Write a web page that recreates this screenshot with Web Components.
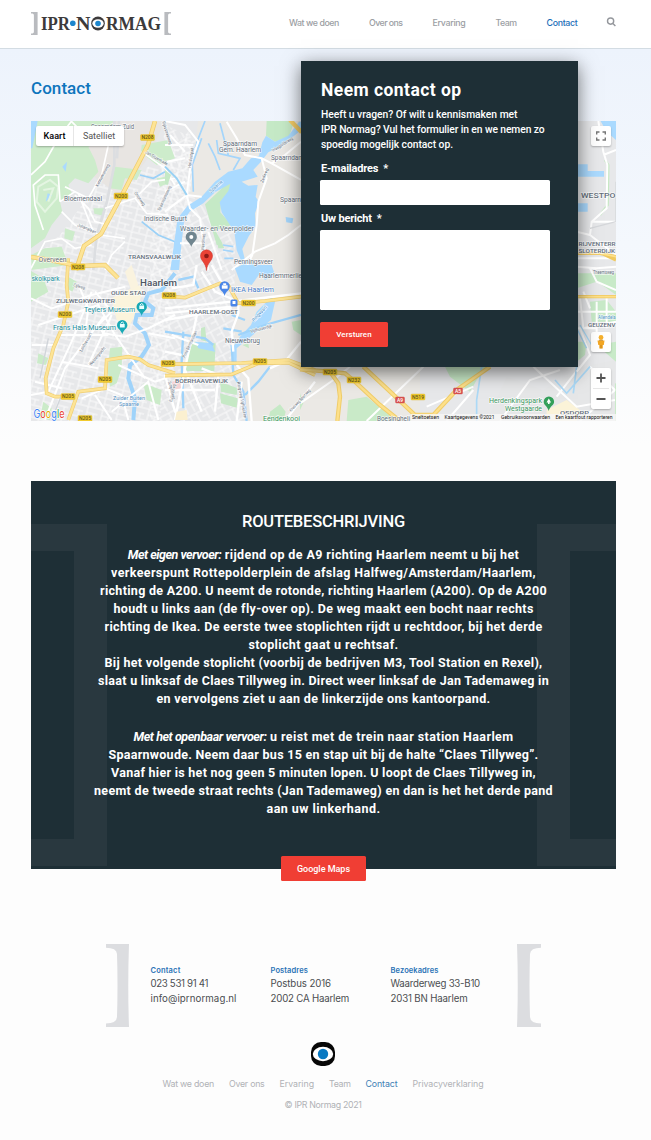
<!DOCTYPE html>
<html lang="nl">
<head>
<meta charset="utf-8">
<title>Contact - IPR Normag</title>
<style>
html,body{margin:0;padding:0}
body{width:651px;height:1140px;overflow:hidden;background:#fdfdfd;font-family:Roboto,"Liberation Sans",sans-serif}
</style>
</head>
<body>
<ipr-page></ipr-page>
<script>
function component(name, html, after) {
  customElements.define(name, class extends HTMLElement {
    constructor() {
      super();
      const t = document.createElement('template');
      t.innerHTML = html;
      this.attachShadow({mode: 'open'}).appendChild(t.content.cloneNode(true));
    }
    connectedCallback() { if (after) after(this); }
  });
}

component('ipr-logo', `
<style>:host{display:block;width:140px;height:24px}svg{display:block}</style>
<svg width="140" height="24" viewBox="31 11 140 24">
  <path d="M31 12h6.600v23H31v-1.600c2.400 0 2.900-.5 2.900-2V15.500c0-1.500-.5-2-2.900-2zM171 12h-6.600v23h6.600v-1.600c-2.400 0-2.900-.5-2.900-2V15.500c0-1.500.5-2 2.900-2z" fill="#b9bbbf"/>
  <g font-family="Liberation Serif,serif" font-weight="700" font-size="18.500" fill="#3c3a3b">
    <text x="41" y="29.800" textLength="29" lengthAdjust="spacingAndGlyphs">IPR</text>
    <text x="76" y="29.800" textLength="14.500" lengthAdjust="spacingAndGlyphs">N</text>
    <text x="106" y="29.800" textLength="55" lengthAdjust="spacingAndGlyphs">RMAG</text>
  </g>
  <circle cx="72.800" cy="23.300" r="2.800" fill="#1d86cd"/>
  <ellipse cx="98" cy="23.500" rx="6.800" ry="6.900" fill="#3c3a3b"/>
  <ellipse cx="98" cy="23.500" rx="5.700" ry="4.200" fill="#fff"/>
  <circle cx="98" cy="23.500" r="2.800" fill="#1d86cd"/>
</svg>`);

component('ipr-header', `
<style>
:host{display:flex;box-sizing:border-box;height:49px;padding:11px 35px 0 31px;background:#fff;border-bottom:1px solid #d3dce3;align-items:flex-start}
nav{display:flex;margin-left:118px;gap:30px;padding-top:5px;font-family:Inter,Roboto,sans-serif;font-size:8.800px;line-height:14px;font-weight:500;color:#9b9ea3}
.on{color:#1b6fb9}
svg{margin:6px 0 0 auto}
</style>
<ipr-logo></ipr-logo>
<nav><fit-text w="50">Wat we doen</fit-text><fit-text w="33.500">Over ons</fit-text><fit-text w="33">Ervaring</fit-text><fit-text w="21">Team</fit-text><fit-text w="31" class="on">Contact</fit-text></nav>
<svg width="10" height="10" viewBox="0 0 10 10" fill="none" stroke="#94979c" stroke-width="1.400"><circle cx="4.600" cy="4.100" r="3.100"/><path d="M6.900 6.400L9.400 8.900"/></svg>`);

component('city-map', `
<style>
:host{display:block;width:585px;height:300px;position:relative;overflow:hidden;background:#e9eaec}
svg{display:block}
.ctl{position:absolute;background:#fff;border-radius:2px;box-shadow:0 1px 2px #0004}
.type{left:5px;top:5px;width:88px;height:20px;display:flex;font-size:9px;line-height:20px;color:#555}
.type span{width:37px;text-align:center;border-right:1px solid #e6e6e6;color:#000;font-weight:500}
.type b{flex:1;text-align:center;font-weight:400}
.full{left:560px;top:5px;width:20px;height:20px}
.man{left:560px;top:211px;width:20px;height:20px}
.zoom{left:560px;top:247px;width:20px;height:41px}
</style>
<svg width="585" height="300" viewBox="31 121 585 300" font-family="Roboto,sans-serif">
<defs>
  <pattern id="st" width="15" height="12" patternUnits="userSpaceOnUse" patternTransform="rotate(14)"><path d="M0 1H15M4 1V12M4 7H15M11 7V12" fill="none" stroke="#fff" stroke-width=".8"/></pattern>
  <pattern id="st2" width="17" height="13" patternUnits="userSpaceOnUse" patternTransform="rotate(-28)"><path d="M0 2H17M6 2V13M0 8H6M13 2V13" fill="none" stroke="#fff" stroke-width=".8"/></pattern>
</defs>
<rect x="31" y="121" width="585" height="300" fill="#e7e8ea"/>
<path d="M100 180L155 165 190 130 195 200 175 280 160 421H31V260L60 235Z" fill="url(#st)"/>
<path d="M165 125L198 140 188 200 235 220V350L250 421H150V260Z" fill="url(#st2)"/>
<path d="M98 121H165L148 158 120 196 88 172 82 150Z" fill="#e8e5e2"/>
<path d="M198 121H420V421H246L236 350 232 300 240 250 228 210 190 196Z" fill="#ebe9e5"/>
<g transform="translate(25 115) scale(.3333)">
  <path d="M18 18H265L240 78 190 95 210 135 220 170 190 205 150 190 130 210 140 235 105 260 112 290 80 330 60 370 18 400Z" fill="#cdeccb"/>
  <path d="M270 155L350 165 335 195 300 190 290 225 255 220Z M350 90L430 75 450 130 395 150 348 112Z M205 280L240 280 235 302 208 296Z M120 340L150 350 142 378 118 370Z M60 400L110 395 130 450 20 465 18 420Z M395 190L420 185 430 205 405 215Z" fill="#cdeccb"/>
  <path d="M18 18H38L22 100 18 100ZM112 155L126 140 122 170ZM68 235L82 240 62 260Z" fill="#aadaff"/>
  <path d="M268 18V150L246 260 215 360 205 465M282 18L276 130" stroke="#dcdee1" stroke-width="8" fill="none"/>
  <path d="M40 215L75 195 100 215 95 250 60 290 35 260ZM55 225L85 220 70 260" fill="none" stroke="#e4f5e2" stroke-width="6"/>
  <g fill="none" stroke="#fff" stroke-width="5"><path d="M18 180L60 140 100 70 140 18M55 345L30 270 25 210 60 180 100 180 105 260M105 260L150 230 190 250 230 180 250 90M150 240L190 280 210 320 250 330M110 290L150 330 225 360 300 370M18 460L60 380 110 370 150 400 200 390M240 280L330 250 380 200 450 190M330 250L365 295 430 300M350 110L420 160 450 210M300 380L260 420 240 465M140 20L180 60 240 60M120 215L160 235 205 350"/></g>
  <path d="M345 180L385 190 420 170M350 320L400 360 450 380M450 380V465" fill="none" stroke="#9bd1f7" stroke-width="5"/>
</g>
<g transform="translate(165 115) scale(.3333)">
  <path d="M120 268L185 206 205 208 198 238 168 260 166 292 200 330 152 345 166 390 155 390Z M305 18H388L372 66 330 80 303 62Z M0 165L18 180 8 210 0 208Z M150 345L170 380 178 400 160 400Z" fill="#c5e9c6"/>
  <path d="M16 465L28 380 38 310 68 272 110 245 150 200 190 170 232 160 258 130 282 122 292 82 303 62 330 80 370 62 402 20H408V46L350 92 310 112 288 140 265 165 278 185 230 200 250 212 278 210 272 245 282 262 270 295 272 335 252 362 232 402 240 435 300 465H240L215 405 208 350 170 292 164 262 190 228 196 206 150 232 115 265 74 290 58 315 50 380 42 465Z" fill="#aadaff"/>
  <path d="M85 230L82 150 110 70 98 100M130 85L150 125 165 165M205 165L225 130 160 115 155 75M165 25L190 120M120 18L100 70 82 130M174 390L205 395M174 405L205 410M178 430H205" fill="none" stroke="#a4d5fb" stroke-width="5"/>
  <path d="M362 306L385 310 382 325 364 322Z" fill="#a4d5fb"/>
  <path d="M185 20L215 70 240 120 290 130 320 145 408 195M290 130L305 190 280 260 275 330 262 420 240 465M408 330L370 360 330 385 270 410 200 465M0 18L60 30 100 80 78 140 65 240 75 280 105 310 110 350 130 465M0 90H85M15 60L60 110M5 140L60 130M0 290L65 240 110 245M130 350L170 465M45 385H110M320 145L360 120 408 80M0 230L60 200" fill="none" stroke="#fff" stroke-width="6"/>
  <path d="M375 15L410 52" stroke="#f4cd68" stroke-width="13"/>
  <path d="M0 155L35 190 65 240" stroke="#98d1f4" stroke-width="6" fill="none"/>
</g>
<g transform="translate(25 265) scale(.3333)">
  <path d="M18 18L55 40 70 80 18 110ZM255 250L292 245 290 310 275 355 255 365 248 320ZM40 265L70 280 62 300 36 295ZM355 355L410 375 405 420 365 405ZM130 35L155 50 142 80 125 70ZM55 410L80 430 75 465 45 460Z" fill="#cbebc9"/>
  <path d="M260 100L320 70 345 60 350 90 330 150 310 190 275 165Z" fill="#fbf4dc"/>
  <path d="M300 20L320 0 340 60 320 80Z" fill="#faf3df"/>
  <path d="M450 25L410 75 370 85 360 110 385 130 380 150 335 150 330 175 360 205 372 240 350 275 315 300 310 340 330 400 325 465" fill="none" stroke="#9fd3fa" stroke-width="12"/>
  <path d="M210 80L260 140 220 180 235 205 300 215 370 190 450 150M18 100L80 130 200 90 300 65M40 180L220 120 270 210 360 340M18 390L70 380 140 230 200 80M60 465L120 310 240 150M100 210L250 210M110 290L220 310M30 350L110 370M170 400L240 370 290 390 310 465M190 300L260 150M280 300L390 350 450 330M370 205L450 220M260 440L370 350 400 465M210 390L260 465M20 240H90M165 70L190 130 180 210" fill="none" stroke="#fff" stroke-width="6"/>
  <path d="M130 465L160 380 240 370 245 285 310 275 345 283 370 300 450 325M130 -20L125 60 130 110 115 180 85 250 62 340 65 385 90 395 155 395" fill="none" stroke="#f1cf73" stroke-width="11"/>
  <path d="M130 465L160 380 240 370 245 285 310 275 345 283 370 300 450 325M130 -20L125 60 130 110 115 180 85 250 62 340 65 385 90 395 155 395" fill="none" stroke="#fde496" stroke-width="7"/>
  <path d="M80 465L110 390M70 220L45 340" stroke="#d1d5da" stroke-width="4"/>
</g>
<g transform="translate(165 265) scale(.3333)">
  <path d="M75 230L152 235 148 318H58ZM165 350L218 370 215 390 168 380ZM165 385L218 400 215 428 168 415ZM315 440L345 418 362 440 355 468H310ZM380 170L408 165V210L385 195ZM232 240L250 235 252 250ZM108 190L120 185 125 230 108 225Z" fill="#c6e9c6"/>
  <path d="M90 230L140 235 150 260 100 250ZM230 0L320 0 330 30 300 45 285 25 260 60 225 50 210 10ZM330 110L320 95 275 140 258 180 225 215 205 245 200 300 215 302 215 250 270 205 318 165Z" fill="#aadaff"/>
  <path d="M200 240L205 330 235 380 245 468M55 200L50 290 55 430M315 305L280 350 240 390M40 45L85 35 100 70M175 190L230 200M200 150L240 165M0 200L120 220 145 240M220 210L300 180 408 150" fill="none" stroke="#9fd3fa" stroke-width="7"/>
  <path d="M0 130L200 110 408 85M0 145L200 125M0 165L90 150 200 130M100 130L85 200 60 310 30 465M0 330L30 440 60 465M20 210L100 240M0 260L50 270M110 310L160 330 150 440M110 20L150 80 220 110 220 145 200 200 205 260M215 300L250 340 260 468M408 230L360 290 315 310M0 375H150M60 315L110 440M95 0L85 60 20 70M360 468L450 350M230 350L215 468M140 0L180 70" fill="none" stroke="#fff" stroke-width="7"/>
  <path d="M0 93L60 98 165 55 190 62 220 115 300 108 408 95M0 298L230 294 370 285 450 315M0 332L200 328 280 295 370 293 450 330" fill="none" stroke="#edca6c" stroke-width="11"/>
  <path d="M0 93L60 98 165 55 190 62 220 115 300 108 408 95M0 298L230 294 370 285 450 315M0 332L200 328 280 295 370 293 450 330" fill="none" stroke="#fde496" stroke-width="7"/>
  <path d="M20 350L45 345 48 370 22 375Z" fill="#f5d3d5"/><path d="M35 440L65 435 68 465H30Z" fill="#fbf0d0"/>
</g>
<path d="M31 257L50 260 78 266 105 265 118 278M155 121L148 145 122 195 101 234 84 246 76 270" fill="none" stroke="#efcb6c" stroke-width="4.500"/>
<path d="M31 257L50 260 78 266 105 265 118 278M155 121L148 145 122 195 101 234 84 246 76 270" fill="none" stroke="#fde496" stroke-width="3"/>
<g transform="translate(300 360) scale(.3333)">
  <path d="M145 120L200 110 290 183H140ZM435 20H560L530 60 510 95 450 50ZM810 130L870 90 948 70V183H780ZM0 100L10 130 0 150Z" fill="#c9eac8"/>
  <path d="M945 0V183H560L620 50 730 90 850 20Z" fill="#e6e7e8"/>
  <path d="M740 150L800 120 840 150 830 183H740Z" fill="#fbf3d8"/>
  <path d="M0 130L100 60 150 20M200 183L370 20M380 140L520 80M440 183L520 90M600 183L690 60 780 30M700 20L830 140 945 120M770 110L840 20M870 20L945 90M840 183L945 90" fill="none" stroke="#fff" stroke-width="6"/>
  <path d="M545 20L530 120V183M830 20L820 100M765 60L800 100 870 20" fill="none" stroke="#acd9f6" stroke-width="5"/>
  <path d="M0 28L90 35 135 40 165 65 240 135 300 183M90 35L115 70 120 110 112 183M190 20L260 85 345 165H400L470 90 570 20" fill="none" stroke="#f0cd6a" stroke-width="13"/>
  <path d="M0 28L90 35 135 40 165 65 240 135 300 183M90 35L115 70 120 110 112 183M190 20L260 85 345 165H400L470 90 570 20" fill="none" stroke="#fde08a" stroke-width="7"/>
</g>
<g transform="translate(570 115) scale(.3333)">
  <path d="M90 15H138V75L110 50ZM20 148H53V168H102V185H20ZM20 265H53V290H20Z" fill="#aadaff"/>
  <path d="M20 475H138V540L110 520 80 500 20 520ZM60 560L110 555 138 590V620H65ZM80 690L138 680V740ZM20 680H50L45 720 20 740Z" fill="#c8eac8"/>
  <path d="M105 135L115 150 113 270 90 300" fill="none" stroke="#c6e8c3" stroke-width="7"/>
  <path d="M85 18L100 110 112 150 110 280 65 320 60 360 20 350M65 320H138M60 360L138 420M20 455L80 460 138 455M60 460L80 500 138 525M138 105L100 120M30 550L40 640 138 620M20 590H138M80 560V680M110 550V640M30 640L60 720 20 770M60 580L40 530M20 640H80M20 430H138" fill="none" stroke="#fff" stroke-width="6"/>
  <path d="M138 200V320L60 340" stroke="#d5d7da" stroke-width="4" fill="none"/>
  <path d="M20 415H90L138 425M20 545H138M95 415L138 435" fill="none" stroke="#f0c95f" stroke-width="10"/><path d="M20 415H90L138 425M20 545H138" fill="none" stroke="#fde08a" stroke-width="5"/>
  <path d="M20 640L50 700M30 630L65 690" stroke="#a9d7f4" stroke-width="4"/>
</g>
<g id="shields"></g>
<g id="labels" paint-order="stroke" stroke="#fff" stroke-opacity=".75" stroke-width="1.300"></g>
<g id="pins">
  <path d="M191.300 247C190 242 185.700 241 185.700 237a5.600 5.600 0 0 1 11.200 0c0 4-4.300 5-5.600 10z" fill="#70858f"/><circle cx="191.300" cy="237" r="2" fill="#fff"/>
  <path d="M206.500 270.500C205.500 262 200.500 261 200.500 255.800a6 6 0 0 1 12 0c0 5.200-5 6.200-6 14.700z" fill="#ea4335" stroke="#c5322b" stroke-width=".5"/><circle cx="206.500" cy="256" r="2.300" fill="#8d1b16"/>
  <path d="M224.600 296C223.500 291 219.400 290.500 219.400 286.500a5.200 5.200 0 0 1 10.400 0c0 4-4.100 4.500-5.200 9.500z" fill="#4a86e8"/><path d="M222 285.500h5.400v3H222zM223.300 285v-1.500h2.700v1.500" fill="#fff" stroke="#fff" stroke-width=".4"/>
  <rect x="230.500" y="299.500" width="7" height="7" rx="1.500" fill="#4a86e8"/><path d="M232.500 301h3v3h-3z" fill="#fff"/>
  <path d="M141.700 316C140.500 311 136.500 310.500 136.500 307a5.200 5.200 0 0 1 10.400 0c0 3.500-4 4-5.200 9zM122.300 334.500C121 329.500 117 329 117 325.300a5.200 5.200 0 0 1 10.400 0c0 3.700-4 4.200-5.100 9.200z" fill="#18a9b5"/><path d="M139.300 305.500h4.800v3.500h-4.800zM119.900 324h4.800v3.500h-4.800z" fill="#e9ffff"/><path d="M140 305L141.700 303.500 143.500 305M120.500 323.500L122.300 322 124 323.500" stroke="#fff" fill="none"/>
  <path d="M548.700 411C547.500 406 543.700 405.500 543.700 401.800a5.200 5.200 0 0 1 10.400 0c0 3.700-4.200 4.200-5.400 9.200z" fill="#34a05a"/><path d="M548.800 398.500l2.300 4h-1.500v1.500H548v-1.500h-1.500z" fill="#fff"/>
</g>
<path d="M411 414H616V421H411Z" fill="#f6f6f6" fill-opacity=".82"/>
<g id="legal" fill="#111"></g>
<g font-size="11.500" font-weight="400" stroke="#fff" stroke-width="1.300" paint-order="stroke"><text x="33.500" y="418" textLength="31" lengthAdjust="spacingAndGlyphs" font-family="Inter,sans-serif"><tspan fill="#4285f4">G</tspan><tspan fill="#ea4335">o</tspan><tspan fill="#e8ad00">o</tspan><tspan fill="#4285f4">g</tspan><tspan fill="#34a853">l</tspan><tspan fill="#ea4335">e</tspan></text></g>
</svg>
<div class="ctl type"><span>Kaart</span><b>Satelliet</b></div>
<div class="ctl full"><svg width="20" height="20" fill="none" stroke="#777" stroke-width="1.400"><path d="M5.700 8.500V6H8.500M11.500 6h2.800v2.500M14.300 11.500V14h-2.800M8.500 14H5.700v-2.500"/></svg></div>
<div class="ctl man"><svg width="20" height="20"><circle cx="10" cy="5.500" r="2.400" fill="#f5b02e"/><path d="M6.500 8.500h7l-.7 4.500h-1v3.500H8.300V13h-1z" fill="#f3a724"/><path d="M8 8.300h4M10 13v3.500" stroke="#bd7d1a" stroke-width=".8"/></svg></div>
<div class="ctl zoom"><svg width="20" height="41" fill="none" stroke="#555" stroke-width="1.800"><path d="M5.500 10h9M10 5.500v9M5.500 31h9"/><path d="M2 20.500h16" stroke="#e6e6e6" stroke-width="1"/></svg></div>`, el => {
  const NS = 'http://www.w3.org/2000/svg';
  const root = el.shadowRoot;
  const put = (parent, tag, attrs, text) => {
    const n = document.createElementNS(NS, tag);
    for (const k in attrs) n.setAttribute(k, attrs[k]);
    if (text) n.textContent = text;
    parent.appendChild(n);
  };
  const G = '#626d7a', T = '#178d9b';
  // text, left, baseline, width, size, colour, rotation, weight
  const labels = [
    ['Spaarndam-Zuid',91,129,43,6.5,G], ['Bloemendaal',64,200.500,38,6.8,G], ['Indische Buurt',144,220.500,43,6.8,G],
    ['Overveen',38.500,262,28,6.8,G], ['TRANSVAALWIJK',128,258.500,53,6,G,0,500], ['Spaarndam',223,145.500,34,6.8,G],
    ['Gem. Haarlem',219,152,42,6.8,G], ['Spaarndam',271,160,33,6.8,G], ['Spaarn',280,202,21,6.8,G],
    ['Waarder- en Veerpolder',180,230.500,74,6.8,'#66747f'], ['Penningsveer',234,264,39,6.8,G],
    ['skolkpark',31.500,281,28,6.8,T], ['Haarlem',140,285.500,37,9,'#4c5562',0,500], ['OUDE STAD',111,295,35,6,G,0,500],
    ['ZIJLWEGKWARTIER',56,302.500,59,6,G,0,500], ['Teylers Museum',84,312,51,7,T], ['Frans Hals Museum',53,330,63,7,T],
    ['IKEA Haarlem',231,291.500,43,7,'#4679c7'], ['Haarlemmerlie',259,278,43,6.8,G], ['HAARLEM-OOST',189,313.500,49,6,G,0,500],
    ['Nieuwebrug',225,342.500,35,6.8,G], ['BOERHAAVEWIJK',175,382.500,53,6,G,0,500], ['Zuider Buiten',113,400,32,6,'#5792c4'],
    ['Spaarne',119,406,20,6,'#5792c4'], ['Eendenkooi',263,421,37,6.8,'#3b9660'], ['Herdenkingspark',489,403,53,7,'#3b9660'],
    ['Westgaarde',505,410.500,37,7,'#3b9660'], ['OSDORP',560,415,29,6,G,0,500], ['Boesingheli',377,421,33,6.5,G],
    ['WESTPO',581,197.500,34.500,7,G,0,500], ['RIJVENTERR',578.500,246,37,6,G,0,500], ['SLOTERDIJK',578.500,252.500,36.500,6,G,0,500],
    ['Theemsweg',593,274,21,4.500,G], ['GEUZENV',588,326.500,27.500,6,G,0,500], ['Allendela',598,319,17.500,4.500,'#4d94c7'],
    ['Kennemerweg',98,187,25,4.500,G,-62], ['Julianalaan',77,226,20,4.500,G,22], ['Jan Gijzenkade',145,153,25,4.500,G,30],
    ['Orionweg',134,193,16,4.500,G,55], ['Spaarndamseweg',160,211,27,4.500,G,-65], ['Rijksstraatweg',162,122,24,4.500,G,72],
    ['Hekslootpad',191,168,20,4.500,G,-82], ['Zeilweg',263,183,15,4.500,G,-68], ['Inlaagpolderweg',273,152,24,4.500,G,-32],
    ['Spaarne',211,193,16,5,'#4f92c6',-42], ['Westergracht',91,366,23,4.500,G,-50], ['Leidsevaart',82,352,21,4.500,G,-61],
    ['Zijlweg',73,286,12,4.500,G,16], ['Prins Bernhardlaan',185,358,29,4.500,G,-65], ['Ringvaart',254,322,20,5,'#4f92c6',-48],
    ['Vijfhuizerdijk',251,333,22,4.500,G,-15], ['Ringweg Vijfhuizen',237,382,37,4.500,G,79], ['Kruisweg Sportweg',291,412,29,4.500,G,-47],
    ['Europaweg',172,402,18,4.500,G,-78], ['Waarderweg',204,250,16,4.500,G,-86], ['Schipholweg',168,382,18,4.500,G,75]
  ];
  const lg = root.getElementById('labels');
  for (const [s, x, y, w, fs, c, r, fw] of labels)
    put(lg, 'text', {x, y, textLength: w, lengthAdjust: 'spacingAndGlyphs', 'font-size': fs, fill: c, 'font-weight': fw || 400, transform: `rotate(${r || 0} ${x} ${y})`}, s);
  const sg = root.getElementById('shields');
  for (const [s, x, y, red] of [['N208',147.500,137.500],['N200',121,196],['N208',78,267],['N200',65,314.500],['N208',169,295.500],['N205',105,379.500],['N205',68,396.500],['N205',85,418.500],['N205',168,363.500],['N205',260,361.500],['N200',248.500,303],['N205',330,372],['N232',354,380],['N519',418,397],['A9',400,400,1],['A5',458,391,1]]) {
    const w = red ? 9 : 14;
    put(sg, 'rect', {x: x - w / 2, y: y - 3, width: w, height: 6, rx: 1, fill: red ? '#d95350' : '#f2cb2f', stroke: red ? '#c44' : '#d9b42b', 'stroke-width': .4});
    put(sg, 'text', {x, y: y + 1.9, 'text-anchor': 'middle', 'font-size': 5, 'font-weight': 500, fill: red ? '#fff' : '#62551b'}, s);
  }
  const q = root.getElementById('legal');
  for (const [s, x, w] of [['Sneltoetsen',412,27],['Kaartgegevens ©2021',444.500,50],['Gebruiksvoorwaarden',501,49],['Een kaartfout rapporteren',555.500,57]])
    put(q, 'text', {x, y: 419.300, textLength: w, lengthAdjust: 'spacingAndGlyphs', 'font-size': 5.500}, s);
});

component('ipr-button', `
<style>:host{display:flex;align-items:center;justify-content:center;background:#f03e34;color:#fff;border-radius:1.500px;height:25px;font-weight:500}</style><slot></slot>`);

component('contact-form', `
<style>
:host{display:block;box-sizing:border-box;width:277px;height:306px;padding:19px 28px 0 19px;background:#1e2f36;color:#fff;box-shadow:0 5px 18px rgba(0,0,0,.55)}
h2{margin:0 0 0 1px;font-size:17.500px;line-height:21px;font-weight:700}
p{margin:6px 0 0 1px;font-size:10.300px;line-height:15px;font-weight:500}
p fit-text{display:block}
label{display:block;margin:9px 0 0 1px;font-size:11px;line-height:16px;font-weight:700;height:16px}
.f{background:#fff;border-radius:1.500px;height:25px;margin-top:3px}
label.second{margin-top:6px}
.area{height:80px}
ipr-button{width:68px;margin-top:12px;font-size:8px}
</style>
<h2><fit-text w="140.500">Neem contact op</fit-text></h2>
<p><fit-text w="196.500">Heeft u vragen? Of wilt u kennismaken met</fit-text><fit-text w="223.500">IPR Normag? Vul het formulier in en we nemen zo</fit-text><fit-text w="132">spoedig mogelijk contact op.</fit-text></p>
<label><fit-text w="67">E-mailadres &nbsp;*</fit-text></label><div class="f"></div>
<label class="second"><fit-text w="60.500">Uw bericht &nbsp;*</fit-text></label><div class="f area"></div>
<ipr-button><fit-text w="35.500">Versturen</fit-text></ipr-button>`);

component('contact-hero', `
<style>
:host{display:block;position:relative;box-sizing:border-box;height:432px;padding:27px 31px 0;background:linear-gradient(#edf3fc,#f4f8fd 45%,#fdfdfd 92%)}
h1{margin:0 0 20px;font-size:17px;line-height:25px;font-weight:500;color:#0d75bd}
contact-form{position:absolute;left:301px;top:12px}
</style>
<h1><fit-text w="60">Contact</fit-text></h1>
<city-map></city-map>
<contact-form></contact-form>`);

component('route-panel', `
<style>
:host{display:flex;flex-direction:column;align-items:center;box-sizing:border-box;position:relative;width:585px;height:388px;margin:0 0 0 31px;padding-top:29px;background:#1e2f36;color:#fff}
.deco{position:absolute;left:0;top:43px}
h2{position:relative;margin:0 0 13px;font-size:16.500px;line-height:23px;font-weight:500}
.l{position:relative;height:18px;line-height:18px;font-size:12.500px;font-weight:700;display:flex;gap:3.500px}
.gap{height:20px}
i{font-style:italic}
ipr-button{position:absolute;left:250px;top:375px;width:85px;font-size:9px}
</style>
<svg class="deco" width="585" height="343" fill="#29383f"><path d="M0 0H76V342H0V315H43V27H0ZM585 0H506V342H585V315H539V27H585Z"/></svg>
<h2><fit-text w="163">ROUTEBESCHRIJVING</fit-text></h2>
<div class="l"><i><fit-text w="93.500">Met eigen vervoer:</fit-text></i><fit-text w="294.500">rijdend op de A9 richting Haarlem neemt u bij het</fit-text></div>
<div class="l"><fit-text w="425">verkeerspunt Rottepolderplein de afslag Halfweg/Amsterdam/Haarlem,</fit-text></div>
<div class="l"><fit-text w="447">richting de A200. U neemt de rotonde, richting Haarlem (A200). Op de A200</fit-text></div>
<div class="l"><fit-text w="420">houdt u links aan (de fly-over op). De weg maakt een bocht naar rechts</fit-text></div>
<div class="l"><fit-text w="438">richting de Ikea. De eerste twee stoplichten rijdt u rechtdoor, bij het derde</fit-text></div>
<div class="l"><fit-text w="150">stoplicht gaat u rechtsaf.</fit-text></div>
<div class="l"><fit-text w="438">Bij het volgende stoplicht (voorbij de bedrijven M3, Tool Station en Rexel),</fit-text></div>
<div class="l"><fit-text w="451">slaat u linksaf de Claes Tillyweg in. Direct weer linksaf de Jan Tademaweg in</fit-text></div>
<div class="l"><fit-text w="334">en vervolgens ziet u aan de linkerzijde ons kantoorpand.</fit-text></div>
<div class="gap"></div>
<div class="l"><i><fit-text w="133">Met het openbaar vervoer:</fit-text></i><fit-text w="243.500">u reist met de trein naar station Haarlem</fit-text></div>
<div class="l"><fit-text w="430">Spaarnwoude. Neem daar bus 15 en stap uit bij de halte “Claes Tillyweg”.</fit-text></div>
<div class="l"><fit-text w="425">Vanaf hier is het nog geen 5 minuten lopen. U loopt de Claes Tillyweg in,</fit-text></div>
<div class="l"><fit-text w="459">neemt de tweede straat rechts (Jan Tademaweg) en dan is het het derde pand</fit-text></div>
<div class="l"><fit-text w="114">aan uw linkerhand.</fit-text></div>
<ipr-button><fit-text w="53">Google Maps</fit-text></ipr-button>`);

component('ipr-address', `
<style>:host{display:block;width:120px;font-family:Inter,Roboto,sans-serif;font-size:9.700px;line-height:15px;color:#4b4d50}
::slotted(*){display:block!important}
::slotted([slot=h]){font-size:7.500px;line-height:10px;font-weight:600;color:#2a73b6}</style>
<slot name="h"></slot><slot></slot>`);

component('ipr-footer', `
<style>
:host{display:block;padding-top:75px;color:#b0b2b6;font-family:Inter,Roboto,sans-serif}
.row{display:flex;height:83px;margin-left:106px;width:435px}
.cols{box-sizing:border-box;display:flex;width:388px;padding:22px 0 0 21.500px}
svg{display:block;flex:none}
.eye{margin:15px 0 0 311px}
nav{display:flex;gap:15px;margin:11px 0 0 162.500px;font-size:8.800px;line-height:14px}
.on{color:#3f80b5}
.copy{margin:7px 0 0 284.500px;font-size:8.800px;line-height:14px}
</style>
<div class="row">
<svg width="23" height="83" fill="#dcdde0"><path d="M0 0H23Q21.500 41.500 23 83H0V79.500Q10.500 79.500 11 73Q12 41.500 11 10Q10.500 3.800 0 3.800Z"/></svg>
<div class="cols">
<ipr-address><fit-text slot="h" w="30">Contact</fit-text><fit-text w="57.500">023 531 91 41</fit-text><fit-text w="86">info@iprnormag.nl</fit-text></ipr-address>
<ipr-address><fit-text slot="h" w="37.500">Postadres</fit-text><fit-text w="60.500">Postbus 2016</fit-text><fit-text w="78.500">2002 CA Haarlem</fit-text></ipr-address>
<ipr-address><fit-text slot="h" w="48">Bezoekadres</fit-text><fit-text w="89.500">Waarderweg 33-B10</fit-text><fit-text w="77">2031 BN Haarlem</fit-text></ipr-address>
</div>
<svg width="24" height="83" fill="#dcdde0"><path d="M24 0H0Q1.500 41.500 0 83H24V79.500Q13.500 79.500 13 73Q12 41.500 13 10Q13.500 3.800 24 3.800Z"/></svg>
</div>
<svg class="eye" width="24" height="24" viewBox="0 0 24 24"><rect width="24" height="24" rx="10" fill="#070707"/><ellipse cx="12" cy="12" rx="10.200" ry="7.200" fill="#fff"/><circle cx="12" cy="12" r="5.200" fill="#0879c2"/></svg>
<nav><fit-text w="51.500">Wat we doen</fit-text><fit-text w="35.500">Over ons</fit-text><fit-text w="34.500">Ervaring</fit-text><fit-text w="21.500">Team</fit-text><fit-text w="32" class="on">Contact</fit-text><fit-text w="71">Privacyverklaring</fit-text></nav>
<div class="copy"><fit-text w="77">© IPR Normag 2021</fit-text></div>`);

component('ipr-page', `
<style>:host{display:block;width:651px;height:1140px;overflow:hidden}</style>
<ipr-header></ipr-header><contact-hero></contact-hero><route-panel></route-panel><ipr-footer></ipr-footer>`);

// A single line of copy whose tracking is adjusted to fill its measure (attribute w).
component('fit-text', `<style>:host{display:block;white-space:nowrap}span{display:inline-block;white-space:nowrap}</style><span><slot></slot></span>`, el => {
  const w = parseFloat(el.getAttribute('w'));
  const natural = el.shadowRoot.querySelector('span').getBoundingClientRect().width;
  el.style.width = w + 'px';
  el.style.letterSpacing = ((w - natural) / el.textContent.length).toFixed(3) + 'px';
});
</script>
</body>
</html>
